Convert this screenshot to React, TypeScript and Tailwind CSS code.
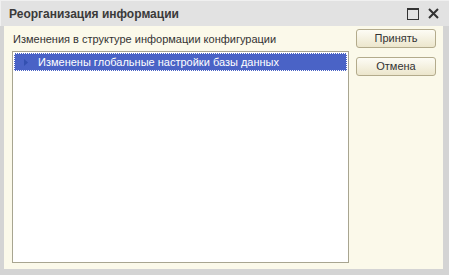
import React from "react";

export default function App() {
  return (
    <div className="w-[449px] h-[275px] bg-[#d4d4d4] flex flex-col" style={{ fontFamily: '"Liberation Sans", Arial, sans-serif' }}>
      <div className="h-[26px] flex items-center pl-[8px] pr-[10px] bg-[#e2e2e2] border-t border-l border-[#f0f0f0]">
        <div className="flex-1 text-[12px] font-bold text-[#3a3a3a] pt-[1px]">Реорганизация информации</div>
        <svg width="12" height="12" viewBox="0 0 12 12" className="mr-[9px]">
          <rect x="0.5" y="0.5" width="11" height="11" fill="none" stroke="#333" strokeWidth="1" />
          <rect x="0.5" y="0.5" width="11" height="1.5" fill="#333" />
        </svg>
        <svg width="11" height="11" viewBox="0 0 11 11">
          <path d="M1 1 L10 10 M10 1 L1 10" stroke="#333" strokeWidth="2" />
        </svg>
      </div>
      <div className="flex-1 ml-[4px] mr-[6px] mb-[6px] bg-[#fbf9ea] flex">
        <div className="flex flex-col pl-[8px] w-[345px]">
          <div className="text-[11px] text-[#333] h-[25px] flex items-center pt-[1px] pl-[1px]">Изменения в структуре информации конфигурации</div>
          <div className="flex-1 bg-white border border-[#a8a590] p-[1px] mb-[6px]">
            <div className="h-[18px] bg-[#4a63c6] border border-dotted border-white flex items-center">
              <svg width="5" height="7" viewBox="0 0 5 7" className="ml-[9px] mr-[9px]">
                <path d="M0 0 L4 3.5 L0 7 Z" fill="#3350b0" />
              </svg>
              <span className="text-[11px] text-white">Изменены глобальные настройки базы данных</span>
            </div>
          </div>
        </div>
        <div className="flex flex-col pl-[7px] pt-[3px] gap-[9px]">
          <button className="w-[80px] h-[19px] rounded-[3px] border border-[#b3ab8c] bg-gradient-to-b from-[#fdfcf5] to-[#ece6cc] text-[11px] text-[#333] flex items-center justify-center">Принять</button>
          <button className="w-[80px] h-[19px] rounded-[3px] border border-[#b3ab8c] bg-gradient-to-b from-[#fdfcf5] to-[#ece6cc] text-[11px] text-[#333] flex items-center justify-center">Отмена</button>
        </div>
      </div>
    </div>
  );
}
